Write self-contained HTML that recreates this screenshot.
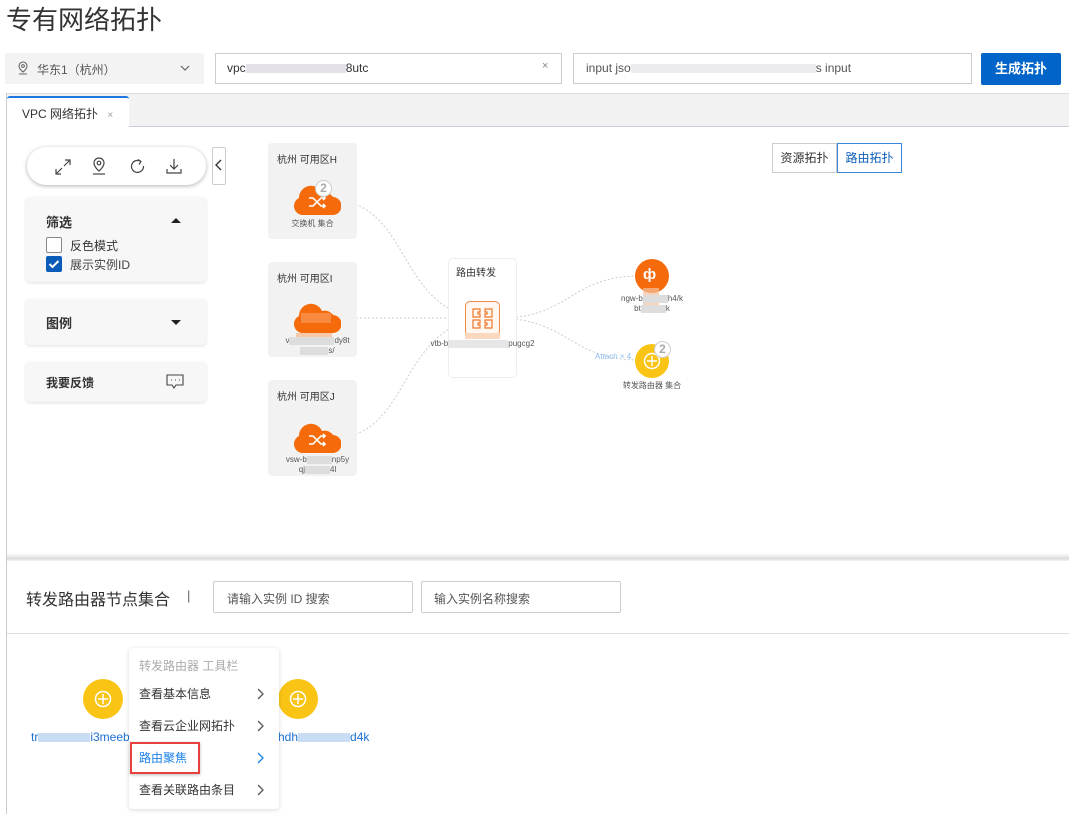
<!DOCTYPE html>
<html><head><meta charset="utf-8">
<style>
*{box-sizing:border-box;margin:0;padding:0}
body{width:1069px;height:814px;overflow:hidden;background:#fff;font-family:"Liberation Sans","Noto Sans CJK SC",sans-serif;color:#333;position:relative}
.a{position:absolute}
.t{font-size:12px;white-space:nowrap}
.zone{position:absolute;left:268px;width:89px;background:#f2f2f2;border-radius:4px}
.zone .h{position:absolute;left:9px;top:8px;font-size:10px;color:#333}
.panel{position:absolute;left:26px;width:180px;background:#f7f7f7;border-radius:4px;box-shadow:0 1px 3px rgba(0,0,0,.12)}
.lbl{position:absolute;font-size:8px;color:#555;text-align:center;white-space:nowrap;line-height:10px}
.blur{display:inline-block;background:#ddd;height:9px;vertical-align:middle}
.mi{position:absolute;left:10px;font-size:12px;color:#333}
.arr{position:absolute;left:127px}
</style></head><body>
<div class="a" style="left:6px;top:0px;font-size:26px;color:#333">专有网络拓扑</div>

<div class="a" style="left:5px;top:53px;width:199px;height:31px;background:#f3f3f4;border-radius:2px"></div>
<svg class="a" style="left:17px;top:61px" width="12" height="14" viewBox="0 0 12 14"><path d="M6 1a4 4 0 0 1 4 4c0 3-4 6-4 6S2 8 2 5a4 4 0 0 1 4-4z" fill="none" stroke="#666" stroke-width="1.1"/><circle cx="6" cy="5" r="1.4" fill="none" stroke="#666"/><path d="M2 13h8" stroke="#666"/></svg>
<div class="a t" style="left:37px;top:61px;color:#555">华东1（杭州）</div>
<svg class="a" style="left:180px;top:65px" width="10" height="6"><path d="M1 1l4 4 4-4" fill="none" stroke="#666" stroke-width="1.2"/></svg>

<div class="a" style="left:215px;top:53px;width:347px;height:31px;border:1px solid #ccc"></div>
<div class="a t" style="left:227px;top:61px;color:#333">vpc<span class="blur" style="width:100px;background:#e4e2e8"></span>8utc</div>
<div class="a" style="left:542px;top:60px;font-size:11px;color:#888">×</div>
<div class="a" style="left:573px;top:53px;width:399px;height:31px;border:1px solid #ccc"></div>
<div class="a t" style="left:586px;top:61px;color:#555">input jso<span class="blur" style="width:185px;background:#ecebee"></span>s input</div>
<div class="a" style="left:981px;top:53px;width:80px;height:32px;background:#0064c8;border-radius:2px;color:#fff;font-size:13px;font-weight:bold;text-align:center;line-height:32px">生成拓扑</div>

<div class="a" style="left:6px;top:93px;width:1063px;height:34px;background:#f2f2f2;border-top:1px solid #ddd;border-bottom:1px solid #ccd"></div>
<div class="a" style="left:7px;top:96px;width:122px;height:32px;background:#fff;border-top:2px solid #1e78e0;border-radius:3px 3px 0 0"></div>
<div class="a t" style="left:22px;top:105px">VPC 网络拓扑 <span style="color:#999;font-size:10px;margin-left:6px">×</span></div>
<div class="a" style="left:6px;top:93px;width:1px;height:721px;background:#ccc"></div>

<div class="a" style="left:27px;top:147px;width:179px;height:38px;border-radius:19px;background:#fff;box-shadow:0 1px 4px rgba(0,0,0,.3)"></div>
<svg class="a" style="left:54px;top:158px" width="18" height="18" viewBox="0 0 18 18" fill="none" stroke="#444" stroke-width="1.2"><path d="M10 8l6-6M11 2h5v5M8 10l-6 6M2 11v5h5"/></svg>
<svg class="a" style="left:91px;top:157px" width="16" height="18" viewBox="0 0 16 18" fill="none" stroke="#444" stroke-width="1.2"><path d="M8 1a5 5 0 0 1 5 5c0 4-5 8-5 8S3 10 3 6a5 5 0 0 1 5-5z"/><circle cx="8" cy="6" r="1.8"/><path d="M2 17h12"/></svg>
<svg class="a" style="left:129px;top:158px" width="17" height="17" viewBox="0 0 17 17" fill="none" stroke="#444" stroke-width="1.2"><path d="M12 3.5A6 6 0 1 0 14.5 8"/><path d="M9 1.5l3 2-2 3"/></svg>
<svg class="a" style="left:165px;top:157px" width="18" height="18" viewBox="0 0 18 18" fill="none" stroke="#444" stroke-width="1.2"><path d="M9 2v10M5 8l4 4 4-4M2 12v4h14v-4"/></svg>
<div class="a" style="left:212px;top:147px;width:14px;height:38px;border:1px solid #ccc;border-radius:2px;background:#fff"></div>
<svg class="a" style="left:215px;top:159px" width="8" height="12"><path d="M6 1L1 6l5 5" fill="none" stroke="#333" stroke-width="1.4"/></svg>

<div class="panel" style="top:197px;height:85px"></div>
<div class="a" style="left:46px;top:212px;font-size:13px;font-weight:bold">筛选</div>
<div class="a" style="left:171px;top:218px;width:0;height:0;border-left:5px solid transparent;border-right:5px solid transparent;border-bottom:5px solid #222"></div>
<div class="a" style="left:46px;top:237px;width:16px;height:16px;border:1px solid #888;background:#fff;border-radius:2px"></div>
<div class="a t" style="left:70px;top:237px;color:#333">反色模式</div>
<div class="a" style="left:46px;top:256px;width:16px;height:16px;background:#0a5cb8;border-radius:2px"></div>
<svg class="a" style="left:48px;top:259px" width="12" height="10"><path d="M1.5 5l3 3 6-6" fill="none" stroke="#fff" stroke-width="2"/></svg>
<div class="a t" style="left:70px;top:256px;color:#444">展示实例ID</div>

<div class="panel" style="top:299px;height:46px"></div>
<div class="a" style="left:46px;top:313px;font-size:13px;font-weight:bold">图例</div>
<div class="a" style="left:171px;top:320px;width:0;height:0;border-left:5px solid transparent;border-right:5px solid transparent;border-top:5px solid #222"></div>

<div class="panel" style="top:362px;height:40px"></div>
<div class="a" style="left:46px;top:374px;font-size:12px;font-weight:bold">我要反馈</div>
<svg class="a" style="left:166px;top:374px" width="18" height="16" viewBox="0 0 18 16" fill="none" stroke="#444" stroke-width="1.1"><path d="M1 1h16v10H10l-2 3-2-3H1z"/><path d="M5 6h1M9 6h1M13 6h1"/></svg>

<div class="a" style="left:772px;top:143px;width:65px;height:30px;border:1px solid #ccc;font-size:12px;text-align:center;line-height:28px;color:#333">资源拓扑</div>
<div class="a" style="left:837px;top:143px;width:65px;height:30px;border:1px solid #3a86d8;font-size:12px;text-align:center;line-height:28px;color:#0a5cb8">路由拓扑</div>

<svg class="a" style="left:0;top:0" width="1069" height="560" fill="none" stroke="#ccc" stroke-width="1" stroke-dasharray="2 2">
<path d="M340 200C410 210 400 310 480 318"/>
<path d="M340 318L480 318"/>
<path d="M340 438C410 430 400 330 480 318"/>
<path d="M500 318C570 318 570 276 640 276"/>
<path d="M500 318C570 320 570 360 640 360"/>
</svg>

<div class="zone" style="top:143px;height:96px"><div class="h">杭州 可用区H</div></div>
<div class="zone" style="top:262px;height:95px"><div class="h">杭州 可用区I</div></div>
<div class="zone" style="top:380px;height:96px"><div class="h">杭州 可用区J</div></div>

<svg class="a" style="left:293px;top:183px" width="48" height="32" viewBox="0 0 48 32"><path d="M9 32A9 9 0 0 1 6 15A12 12 0 0 1 29 10A10 10 0 0 1 40 14A9 9 0 0 1 39 32Z" fill="#f56a0a"/><path d="M16 15h4l8 8h4M16 23h4l8-8h4M30 13l2 2-2 2M30 21l2 2-2 2" stroke="#fff" stroke-width="1.6" fill="none"/></svg>
<div class="a" style="left:315px;top:180px;width:17px;height:17px;border-radius:50%;background:#fff;border:1.5px solid #ccc;font-size:12px;font-weight:bold;color:#aaa;text-align:center;line-height:14px">2</div>
<div class="lbl" style="left:280px;top:219px;width:65px">交换机 集合</div>

<svg class="a" style="left:293px;top:301px" width="48" height="32" viewBox="0 0 48 32"><path d="M9 32A9 9 0 0 1 6 15A12 12 0 0 1 29 10A10 10 0 0 1 40 14A9 9 0 0 1 39 32Z" fill="#f56a0a"/><rect x="8" y="12" width="30" height="10" fill="#f8a060" opacity=".6"/></svg>
<div class="a" style="left:296px;top:333px;width:36px;height:8px;background:#f9c8a8"></div>
<div class="lbl" style="left:280px;top:336px;width:75px">v<span class="blur" style="width:45px;height:8px"></span>dy8t<br><span class="blur" style="width:28px;height:8px"></span>s/</div>

<svg class="a" style="left:293px;top:421px" width="48" height="32" viewBox="0 0 48 32"><path d="M9 32A9 9 0 0 1 6 15A12 12 0 0 1 29 10A10 10 0 0 1 40 14A9 9 0 0 1 39 32Z" fill="#f56a0a"/><path d="M16 15h4l8 8h4M16 23h4l8-8h4M30 13l2 2-2 2M30 21l2 2-2 2" stroke="#fff" stroke-width="1.6" fill="none"/></svg>
<div class="lbl" style="left:280px;top:455px;width:75px">vsw-b<span class="blur" style="width:25px;height:8px"></span>np5y<br>qj<span class="blur" style="width:25px;height:8px"></span>4l</div>

<div class="a" style="left:448px;top:258px;width:69px;height:120px;border:1px solid #eee;border-radius:5px;background:#fff"></div>
<div class="a" style="left:456px;top:264px;font-size:10px;color:#333">路由转发</div>
<div class="a" style="left:465px;top:301px;width:35px;height:35px;border:1.5px solid #f08a4a;border-radius:5px;background:#fff7f0"></div>
<svg class="a" style="left:471px;top:307px" width="23" height="23" viewBox="0 0 23 23" fill="none" stroke="#f0782a" stroke-width="1.2"><path d="M2 2h7v3h-2v2h2v3H2zM21 2h-7v3h2v2h-2v3h7zM2 21h7v-3h-2v-2h2v-3H2zM21 21h-7v-3h2v-2h-2v-3h7z"/></svg>
<div class="a" style="left:465px;top:333px;width:35px;height:6px;background:#fbd8c0"></div>
<div class="lbl" style="left:430px;top:339px;width:105px">vtb-b<span class="blur" style="width:60px;height:8px;background:#e6e6e6"></span>pugcg2</div>

<div class="a" style="left:635px;top:259px;width:34px;height:34px;border-radius:50%;background:#f56a0a"></div>
<div class="a" style="left:643px;top:266px;color:#fff;font-size:15px;font-weight:bold">ф</div>
<div class="a" style="left:643px;top:288px;width:16px;height:20px;background:#f4c0a0;opacity:.7"></div>
<div class="lbl" style="left:612px;top:294px;width:80px">ngw-b<span class="blur" style="width:25px;height:8px"></span>h4/k<br>bt<span class="blur" style="width:25px;height:8px"></span>k</div>

<div class="a" style="left:595px;top:352px;font-size:8px;color:#8cbcf0">Attach × 4</div>
<div class="a" style="left:635px;top:344px;width:34px;height:34px;border-radius:50%;background:#fac415"></div>
<svg class="a" style="left:642px;top:351px" width="20" height="20" viewBox="0 0 20 20" fill="none" stroke="#fff" stroke-width="1.4"><circle cx="10" cy="10" r="7.5"/><path d="M10 5v10M5 10h10"/></svg>
<div class="a" style="left:654px;top:341px;width:17px;height:17px;border-radius:50%;background:#fff;border:1.5px solid #ccc;font-size:12px;font-weight:bold;color:#aaa;text-align:center;line-height:14px">2</div>
<div class="lbl" style="left:612px;top:381px;width:80px">转发路由器 集合</div>

<div class="a" style="left:7px;top:553px;width:1062px;height:8px;background:linear-gradient(#fff,#ddd 70%,#f2f2f2)"></div>

<div class="a" style="left:26px;top:586px;font-size:16px;color:#333">转发路由器节点集合</div>
<div class="a" style="left:187px;top:588px;font-size:13px;color:#666">|</div>
<div class="a" style="left:213px;top:581px;width:200px;height:32px;border:1px solid #ccc;border-radius:2px"></div>
<div class="a t" style="left:227px;top:590px;color:#555">请输入实例 ID 搜索</div>
<div class="a" style="left:421px;top:581px;width:200px;height:32px;border:1px solid #ccc;border-radius:2px"></div>
<div class="a t" style="left:434px;top:590px;color:#555">输入实例名称搜索</div>
<div class="a" style="left:7px;top:633px;width:1062px;height:1px;background:#ddd"></div>

<div class="a" style="left:83px;top:679px;width:40px;height:40px;border-radius:50%;background:#fac415"></div>
<svg class="a" style="left:92px;top:688px" width="22" height="22" viewBox="0 0 22 22" fill="none" stroke="#fff" stroke-width="1.5"><circle cx="11" cy="11" r="7.5"/><path d="M11 6v10M6 11h10"/></svg>
<div class="a" style="left:278px;top:679px;width:40px;height:40px;border-radius:50%;background:#fac415"></div>
<svg class="a" style="left:287px;top:688px" width="22" height="22" viewBox="0 0 22 22" fill="none" stroke="#fff" stroke-width="1.5"><circle cx="11" cy="11" r="7.5"/><path d="M11 6v10M6 11h10"/></svg>
<div class="a t" style="left:31px;top:730px;color:#1a6fd0">tr<span class="blur" style="width:52px;background:#c8dcf4"></span>i3meebv</div>
<div class="a t" style="left:278px;top:730px;color:#1a6fd0">hdh<span class="blur" style="width:52px;background:#c8dcf4"></span>d4k</div>

<div class="a" style="left:129px;top:648px;width:150px;height:161px;background:#fff;border-radius:4px;box-shadow:0 1px 5px rgba(0,0,0,.15)">
<div class="mi" style="top:9px;color:#aaa">转发路由器 工具栏</div>
<div class="mi" style="top:37px">查看基本信息</div><svg class="arr" style="top:40px" width="8" height="12"><path d="M2 1l5 5-5 5" fill="none" stroke="#555" stroke-width="1.3"/></svg>
<div class="mi" style="top:69px">查看云企业网拓扑</div><svg class="arr" style="top:72px" width="8" height="12"><path d="M2 1l5 5-5 5" fill="none" stroke="#555" stroke-width="1.3"/></svg>
<div class="mi" style="top:101px;color:#1a80e8">路由聚焦</div><svg class="arr" style="top:104px" width="8" height="12"><path d="M2 1l5 5-5 5" fill="none" stroke="#1a80e8" stroke-width="1.3"/></svg>
<div class="mi" style="top:133px">查看关联路由条目</div><svg class="arr" style="top:136px" width="8" height="12"><path d="M2 1l5 5-5 5" fill="none" stroke="#555" stroke-width="1.3"/></svg>
</div>
<div class="a" style="left:130px;top:742px;width:70px;height:32px;border:2.5px solid #e8403f;box-shadow:0 1px 3px rgba(0,0,0,.25)"></div>
</body></html>
